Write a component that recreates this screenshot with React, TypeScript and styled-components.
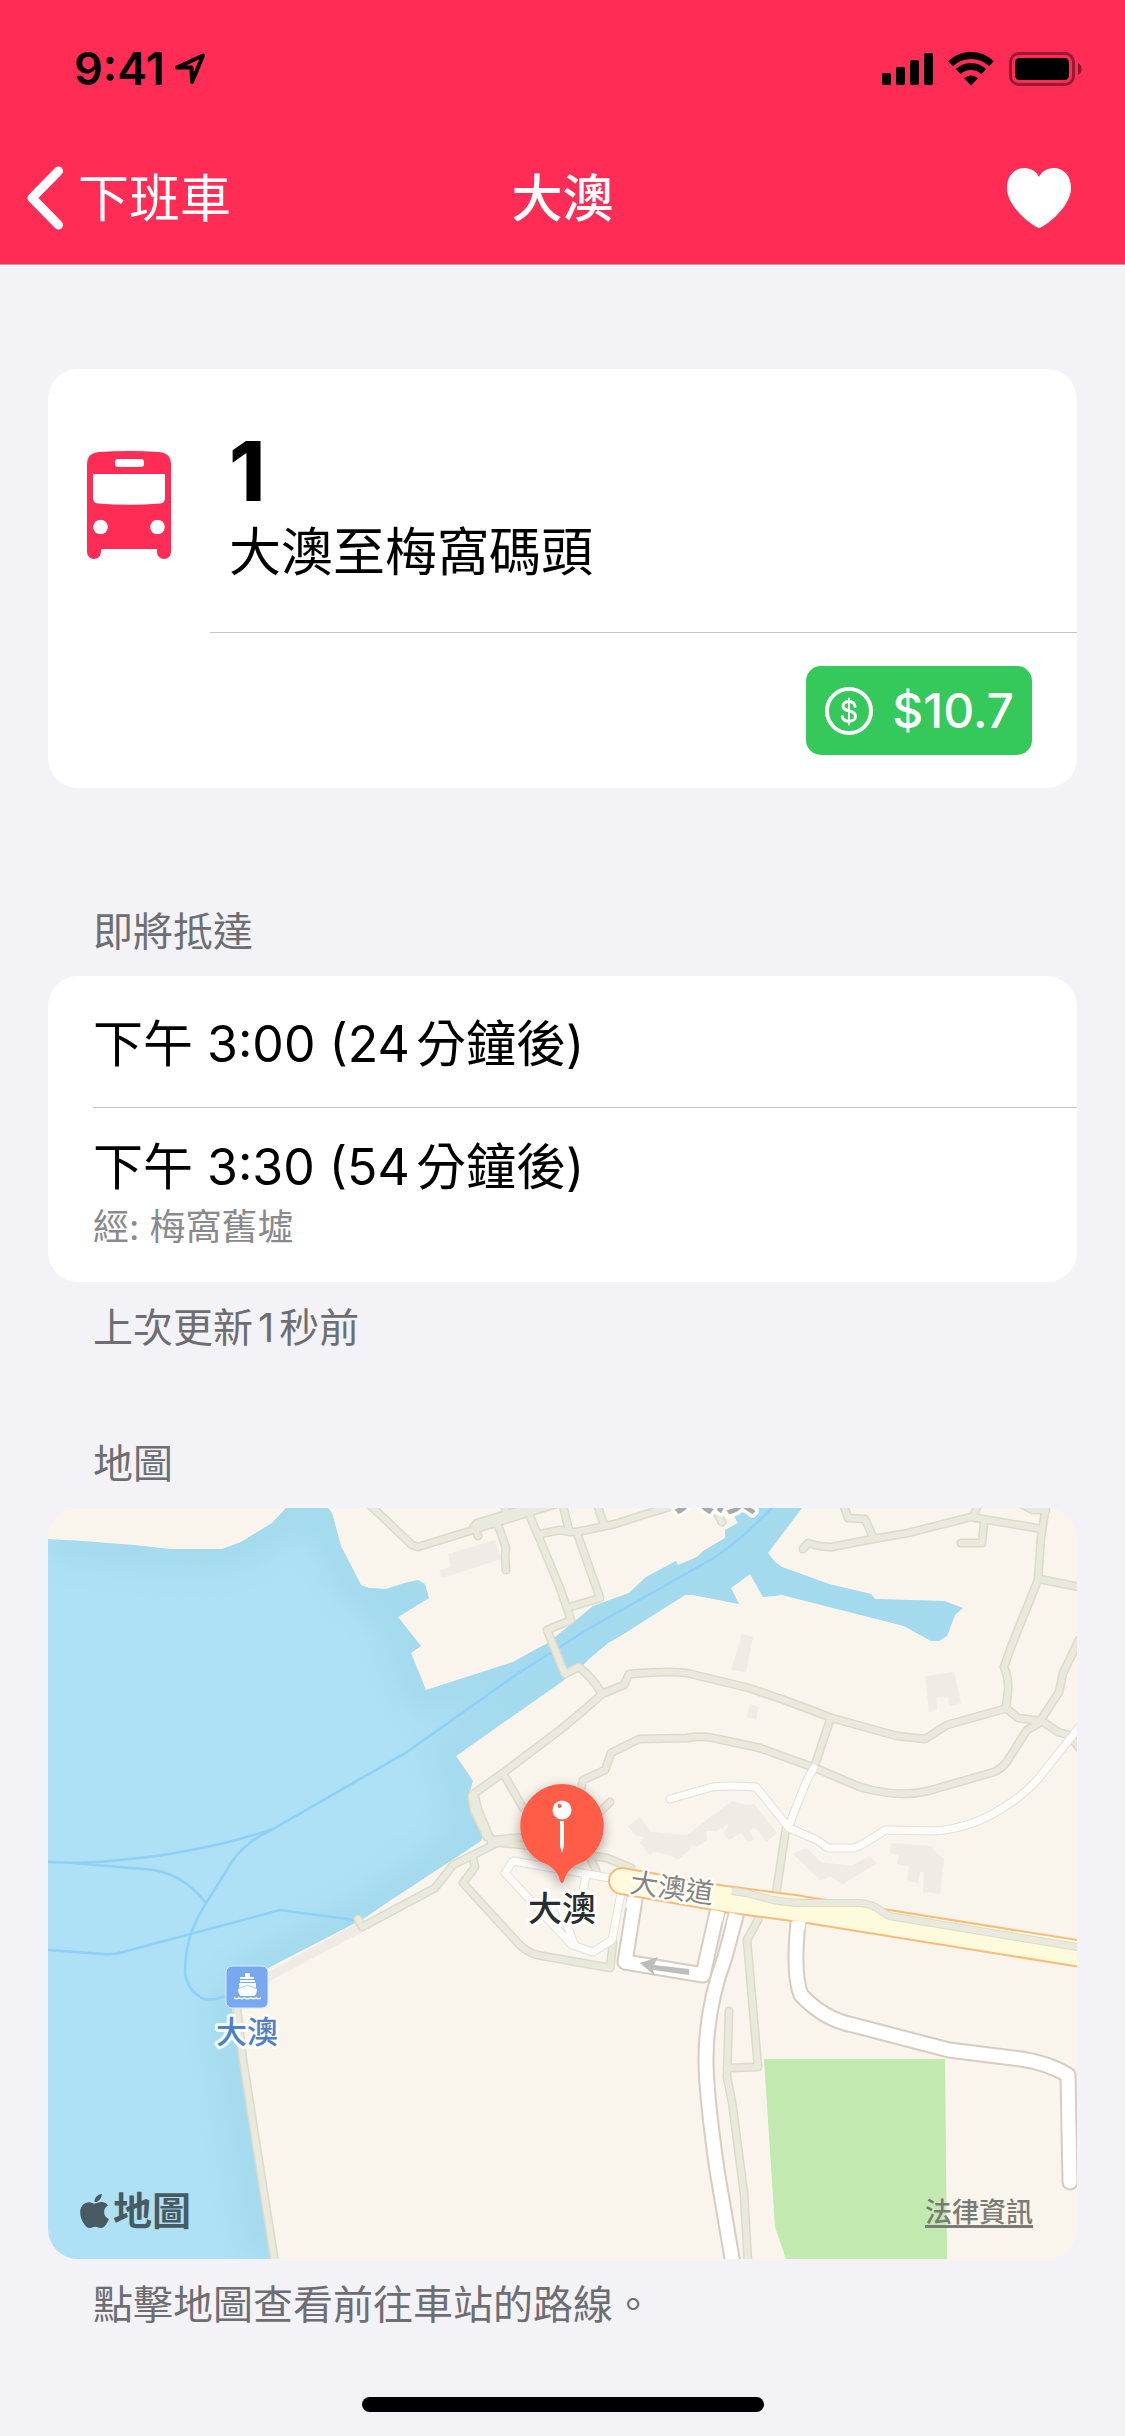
import React from 'react';
import styled, { createGlobalStyle } from 'styled-components';
import { FaApple } from 'react-icons/fa';

const color = {
  brand: '#ff2d55',
  page: '#f2f2f7',
  card: '#ffffff',
  line: '#c6c6c8',
  caption: '#6d6d72',
  secondary: '#8a8a8e',
  fare: '#35c85b',
};

const GlobalStyle = createGlobalStyle`
  * { box-sizing: border-box; }
  body {
    margin: 0;
    background: ${color.page};
    color: #000;
    font-family: Inter, "Noto Sans CJK TC", "Noto Sans CJK HK", sans-serif;
    text-autospace: normal;
  }
  h1, h2, p, ul { margin: 0; padding: 0; font-weight: 400; }
  button { font: inherit; color: inherit; background: none; border: 0; padding: 0; cursor: pointer; }
  svg { display: block; flex: none; }
`;

const Screen = styled.div`
  min-height: 100vh;
  display: flex;
  flex-direction: column;
`;

const Header = styled.header`
  background: ${color.brand};
  border-bottom: 1px solid #b3a3ab;
`;

const StatusBar = styled.div`
  height: 132px;
  padding: 6px 43px 0 74px;
  display: flex;
  align-items: center;
  justify-content: space-between;
`;

const StatusGroup = styled.div<{ $gap: number }>`
  display: flex;
  align-items: center;
  gap: ${({ $gap }) => $gap}px;
`;

const Clock = styled.time`
  font-size: 45px;
  line-height: 54px;
  font-weight: 600;
`;

const NavBar = styled.nav`
  height: 132px;
  padding: 0 27px;
  display: grid;
  grid-template-columns: 1fr auto 1fr;
  align-items: center;
  color: #fff;
  font-size: 51px;
  line-height: 66px;
`;

const BackButton = styled.button`
  justify-self: start;
  display: flex;
  align-items: center;
  gap: 14px;
`;

const BackLabel = styled.span`
  padding-top: 2px;
`;

const Title = styled.h1`
  padding-top: 2px;
  font-size: 51px;
  font-weight: 500;
`;

const FavouriteButton = styled.button`
  justify-self: end;
  padding-right: 27px;
`;

const Content = styled.main`
  padding: 104px 48px 0;
`;

const Card = styled.div`
  background: ${color.card};
  border-radius: 30px;
  overflow: hidden;
`;

const RouteRow = styled.div`
  display: flex;
  align-items: center;
  padding: 55px 39px 46px;
  gap: 58px;
`;

const RouteNumber = styled.p`
  font-size: 82px;
  line-height: 96px;
  font-weight: 800;
`;

const RouteName = styled.p`
  font-size: 52px;
  line-height: 66px;
`;

const FareRow = styled.div`
  margin-left: 162px;
  border-top: 1px solid ${color.line};
  padding: 33px 45px 33px 0;
  display: flex;
  justify-content: flex-end;
`;

const FareBadge = styled.span`
  display: flex;
  align-items: center;
  gap: 18px;
  height: 89px;
  padding: 0 18px;
  border-radius: 15px;
  background: ${color.fare};
  color: #fff;
  font-size: 48px;
  font-weight: 500;
`;

const Section = styled.section<{ $top: number }>`
  padding-top: ${({ $top }) => $top}px;
`;

const SectionTitle = styled.h2`
  padding: 0 45px 17px;
  font-size: 40px;
  line-height: 54px;
  color: ${color.caption};
`;

const SectionNote = styled.p`
  padding: 19px 45px 0;
  font-size: 40px;
  line-height: 54px;
  color: ${color.caption};
`;

const ArrivalList = styled.ul`
  list-style: none;
`;

const Arrival = styled.li`
  margin-left: 45px;
  padding: 35px 45px 30px 0;
  & + & {
    border-top: 1px solid ${color.line};
    padding: 26px 45px 28px 0;
  }
`;

const ArrivalTime = styled.p`
  font-size: 50px;
  line-height: 66px;
`;

const ArrivalVia = styled.p`
  font-size: 36px;
  line-height: 54px;
  color: ${color.secondary};
`;

const MapCard = styled(Card)`
  position: relative;
  height: 751px;
  background: #f9f4ec;
`;

const MapOverlay = styled.div`
  position: absolute;
  left: 32px;
  right: 44px;
  bottom: 21px;
  display: flex;
  align-items: center;
  justify-content: space-between;
`;

const MapBrand = styled.span`
  display: flex;
  align-items: center;
  gap: 4px;
  color: #485b62;
  font-size: 39px;
  line-height: 54px;
  font-weight: 600;
`;

const AppleLogo = styled(FaApple)`
  width: 29px;
  height: 36px;
`;

const LegalLink = styled.a`
  padding-top: 4px;
  color: #7b7b76;
  font-size: 27px;
  line-height: 36px;
  font-weight: 500;
  text-decoration: underline;
  text-decoration-thickness: 3px;
  text-underline-offset: 3px;
`;

const MapLabel = styled.text<{ $size: number; $weight?: number; $halo?: number }>`
  font-size: ${({ $size }) => $size}px;
  font-weight: ${({ $weight }) => $weight ?? 500};
  text-anchor: middle;
  paint-order: stroke;
  stroke: #fff;
  stroke-opacity: 0.9;
  stroke-width: ${({ $halo }) => $halo ?? 7}px;
  stroke-linejoin: round;
`;

const BottomBar = styled.footer`
  margin-top: auto;
  padding-bottom: 24px;
  display: flex;
  justify-content: center;
`;

const HomeIndicator = styled.div`
  width: 402px;
  height: 15px;
  border-radius: 8px;
  background: #000;
`;

const LocationIcon = () => (
  <svg width="30" height="32" viewBox="0 0 30 32" fill="none" stroke="#000" strokeWidth="4" strokeLinejoin="round" aria-hidden="true">
    <path d="M2 14.500 28 2.500 17 29 16.500 14.500Z" />
  </svg>
);

const SignalIcon = () => (
  <svg width="51" height="34" viewBox="0 0 51 34" aria-hidden="true">
    <rect x="0" y="21" width="9" height="12" rx="2" />
    <rect x="14" y="15" width="9" height="18" rx="2" />
    <rect x="28" y="8" width="9" height="25" rx="2" />
    <rect x="42" y="1" width="9" height="32" rx="2" />
  </svg>
);

const WifiIcon = () => (
  <svg width="46" height="34" viewBox="0 0 46 34" fill="none" aria-hidden="true">
    <path d="M2.600 11.700a29.500 29.500 0 0 1 40.800 0" stroke="#000" strokeWidth="7" />
    <path d="M10.200 19.600a18.500 18.500 0 0 1 25.600 0" stroke="#000" strokeWidth="7" />
    <path d="M16.100 26.300a10 10 0 0 1 13.800 0L23 33.500z" fill="#000" />
  </svg>
);

const BatteryIcon = () => (
  <svg width="73" height="34" viewBox="0 0 73 34" aria-hidden="true">
    <rect x="1.500" y="1.500" width="63" height="31" rx="8.500" fill="none" stroke="#000" strokeOpacity="0.4" strokeWidth="3" />
    <rect x="6" y="6" width="54" height="22" rx="4.500" />
    <path d="M69 11c5 2 5 10 0 12z" fillOpacity="0.45" />
  </svg>
);

const ChevronIcon = () => (
  <svg width="37" height="64" viewBox="0 0 37 64" fill="none" stroke="#fff" strokeWidth="9" strokeLinecap="round" strokeLinejoin="round" aria-hidden="true">
    <path d="M31.500 5 5 32l26.500 27" />
  </svg>
);

const HeartIcon = () => (
  <svg width="64" height="60" viewBox="0 0 64 60" fill="#fff" aria-hidden="true">
    <path d="M32 60C28 60 0 40 0 20 0 8 7 0 17.500 0 24 0 29.500 3.500 32 9 34.500 3.500 40 0 46.500 0 57 0 64 8 64 20 64 40 36 60 32 60Z" />
  </svg>
);

const BusIcon = () => (
  <svg width="84" height="108" viewBox="0 0 84 108" aria-hidden="true">
    <path
      fill={color.brand}
      d="M12 1Q42-1 72 1 84 2 84 13V101a7 7 0 0 1-14 0V98H14v3a7 7 0 0 1-14 0V13Q0 2 12 1Z"
    />
    <g fill="#fff">
      <rect x="28" y="8" width="29" height="8" rx="3" />
      <path d="M6 23H78V47Q78 52 73 52.500 42 55 11 52.500 6 52 6 47Z" />
      <circle cx="13.500" cy="76" r="7.300" />
      <circle cx="70.500" cy="76" r="7.300" />
    </g>
  </svg>
);

const CoinIcon = () => (
  <svg width="50" height="50" viewBox="0 0 50 50" fill="none" stroke="#fff" strokeLinecap="round" aria-hidden="true">
    <circle cx="25" cy="25" r="22" strokeWidth="4" />
    <path strokeWidth="3" d="M31 20.500C30.500 17 28.500 15.500 25 15.500 21.500 15.500 19 17.200 19 20 19 23 21.500 23.800 25 24.800 29 25.900 31.500 27 31.500 30.300 31.500 33.300 29 35.300 25 35.300 21.200 35.300 18.700 33.500 18.300 30.500" />
    <path strokeWidth="2" d="M25 12.500v26" />
  </svg>
);

const WATER =
  'M0 31 34 33 85 37 122 41H174L193 34 224 15 238 0H280L284 5 293 38 313 77 321 80 338 81 360 74 370 72 377 76 381 90 350 109 373 138 363 145 378 182 465 154 492 139 500 135 512 125 527 113 545 98 581 85 598 69 628 53 630 57 649 49 655 43 677 30V22L690 15 686 8 694 3 705 7 710 0H754L720 45 727 54 734 59 781 76 823 86 827 91 896 93 915 100 907 107 899 128 891 133H883L856 118 734 87 715 89 702 66 683 80 691 96 645 87H637L574 127 560 135 541 151 534 158 512 175 408 248 425 273 420 289 435 327 433 333 343 392 315 411 220 460 184 500 223 751';

const FERRY_LINES = [
  'M0 354 29 355Q90 352 132 344 180 336 225 321L359 244 469 166 512 139 540 121 664 51Q691 34 724 0',
  'M24 355 95 361Q132 362 158 395',
  'M225 321Q200 332 185 352L160 392Q150 408 145 420 137 440 137 465 140 484 156 491 166 493 178 488',
  'M0 442 55 446Q65 447 75 444L232 402 307 412',
];

const BUILDINGS = [
  '400,46 447,32 453,51 394,70 391,62 403,59',
  '694,126 705,129 698,164 683,162',
  '702,196 711,199 708,212 699,209',
  '877,168 906,164 913,195 901,198 900,188 888,190 889,201 881,204',
  '580,318 592,309 603,324 639,327 684,293 698,297 706,296 729,325 719,334 707,320 701,322 706,331 700,334 693,325 681,332 676,326 681,315 669,323 658,323 659,332 648,339 644,336 641,342 630,352 622,347 605,344 602,348 592,334 596,329 588,328',
  '745,346 758,340 773,354 803,358 821,348 829,355 795,376 782,369 772,372',
  '843,335 884,338 886,343 896,351 892,386 875,384 876,364 872,364 870,375 859,373 861,358 849,356 851,347 842,345',
  '220,464 309,415 314,424 220,474',
];

const FOOTPATHS = [
  'M322-3 364 37 370 39 425 22 479 5 512-5',
  'M430 28 426 18 429 15 459 6 500-6',
  'M459 8 456-4',
  'M450 17 458 40 457 47 458 62',
  'M480 4 490 27 512 80 523 112 499 122 517 166 531 159Q545 170 554 186',
  'M492 26 512 22 522 24H529L567 16 595 7 625-2',
  'M515-2 521 22',
  'M550-1 556 17',
  'M529 25 552 90 522 99',
  'M669 5 674 14',
  'M796-2 800 10 817 11 825 29',
  'M755 41 760 35Q772 39 784 39L825 31 860 25 923 9 994 21',
  'M929-2 926 8',
  'M936 15 934 35 913 35',
  'M973-4 985 2 998 2',
  'M998-2 993 29 990 72 963 139 956 159Q961 172 960 182L958 200 970 210 994 213 1010 224 1021 227 1032 241',
  'M991 71 1031 79',
  'M1031 132 1015 165 1011 184 998 204 993 212',
  'M424 287 455 265 512 222 536 202 554 186 576 177 581 166Q630 162 643 166L701 180 739 193 784 210 849 228 877 231 899 217 956 201',
  'M782 212 767 257',
  'M533 282 535 272 557 262 563 245 591 231 639 230Q655 227 670 231L712 240 767 260 812 279Q850 290 880 283L946 264Q955 260 960 252L979 222 993 214',
  'M562 294 550 306',
  'M455 265 475 300',
  'M427 289 430 302 443 332',
  'M424 289 426 302 439 329',
  'M443 332 480 329',
  'M443 334 475 337 559 350 583 360',
  'M540 345 548 362',
  'M310 411 314 419 387 380 405 357 449 335',
  'M425 350 427 359 415 375 469 434Q478 444 489 447L512 451 562 460 565 435',
  'M189 501 195 552 227 755',
  'M710 412 699 432 710 559 679 560',
  'M681 503 679 569 684 594 696 685 700 755',
  'M738 320 728 386',
];

const LANES = [
  'M622 291 664 279Q680 277 708 279L741 320 769 332 780 340H806Q815 337 837 322L887 323Q925 320 956 299 975 288 990 271L1032 218',
  'M766 260 759 272 741 317',
  'M568 371 465 353 457 365 524 437 545 444 564 432 573 385',
  'M538 367 533 395',
  'M513 400 526 436',
];

const STREETS = [
  'M690 400 677 449Q658 500 658 552 658 585 669 662L685 756',
  'M588 385 577 454 655 467 671 395',
  'M751 405Q744 465 753 487 777 512 805 517L901 542 973 551Q1000 555 1020 567L1022 674',
];

const MAIN_ROAD = 'M574 373 677 391 753 401 1040 447';
const ROADSIDE_PATH = 'M684 383 698 385 725 392Q740 395 760 395H812Q822 396 829 400L841 408 1035 440';

type RoadsProps = { paths: string[]; edge: string; fill: string; width: number; border: number; cap?: 'round' | 'butt' };

const Roads = ({ paths, edge, fill, width, border, cap = 'round' }: RoadsProps) => (
  <g fill="none" strokeLinejoin="round" strokeLinecap={cap}>
    <g stroke={edge} strokeWidth={width}>
      {paths.map((d) => <path key={d} d={d} />)}
    </g>
    <g stroke={fill} strokeWidth={width - border * 2}>
      {paths.map((d) => <path key={d} d={d} />)}
    </g>
  </g>
);

const StopMap = () => (
  <svg width="100%" height="100%" viewBox="0 0 1029 751" preserveAspectRatio="xMidYMid slice" role="img" aria-label="大澳">
    <defs>
      <clipPath id="water"><path d={`${WATER}H0Z`} /></clipPath>
      <filter id="soft" x="-10%" y="-10%" width="120%" height="120%"><feGaussianBlur stdDeviation="16" /></filter>
      <filter id="drop" x="-40%" y="-40%" width="180%" height="180%">
        <feDropShadow dx="0" dy="4" stdDeviation="6" floodColor="#000" floodOpacity="0.35" />
      </filter>
    </defs>
    <rect width="1029" height="751" fill="#f9f4ec" />
    <path d="M716 551H897L899 751H738L727 719Z" fill="#c2e9b0" />
    <g clipPath="url(#water)">
      <path d={`${WATER}H0Z`} fill="#aee1f6" />
      <path d={WATER} fill="none" stroke="#a4daed" strokeWidth="52" filter="url(#soft)" />
      <g fill="none" stroke="#8ed0f7" strokeWidth="2.500">
        {FERRY_LINES.map((d) => <path key={d} d={d} />)}
      </g>
    </g>
    <g fill="#f0ebe5">
      {BUILDINGS.map((points) => <polygon key={points} points={points} />)}
    </g>
    <Roads paths={FOOTPATHS} edge="#dddac9" fill="#e9e9dd" width={9} border={1.5} />
    <Roads paths={LANES} edge="#e3e0da" fill="#fefcf9" width={9} border={1} />
    <Roads paths={STREETS} edge="#d6ccc2" fill="#fff" width={17} border={2} />
    <Roads paths={[MAIN_ROAD]} edge="#f9bb7c" fill="#fdfbdc" width={28} border={2} />
    <g fill="none" stroke="#fff" strokeWidth="13">
      <path d="M586 390 584 401" />
      <path d="M688 406 685 417" />
      <path d="M670 403 668 412" />
      <path d="M751 413 750 421" />
    </g>
    <Roads paths={[ROADSIDE_PATH]} edge="#dddac9" fill="#e9e9dd" width={8} border={1} cap="butt" />
    <path d="M592 455 610 449 606 457 641 461V467L605 462 607 468Z" fill="#bdbdbd" />

    <MapLabel x="667" y="2" $size={42} $weight={600} fill="#a9a9a7">大澳</MapLabel>
    <MapLabel x="624" y="390" $size={28} $weight={400} $halo={5} fill="#858582" transform="rotate(8 624 380)">大澳道</MapLabel>

    <g>
      <rect x="178" y="458" width="42" height="42" rx="6" fill="#78a9f0" stroke="#d8ecfb" />
      <g fill="#fff">
        <path d="M197 465h5v4h4v2h-14v-2h5zM192 472h15v2h-15zM191 475h17v5l-8.500-3-8.500 3z" />
        <path d="M190 481l9.500-3.500 9.500 3.500c0 3-1 5-2.500 7h-14c-1.500-2-2.500-4-2.500-7z" />
        <path d="M186 489q2.500 2 5 0 2.500 2 5 0 3.500 2 7 0 2.500 2 5 0 2.500 2 5 0v1.500q-2.500 2-5 0-2.500 2-5 0-3.500 2-7 0-2.500 2-5 0-2.500 2-5 0z" />
      </g>
      <MapLabel x="199" y="535" $size={31} $halo={6} fill="#4f80c2">大澳</MapLabel>
    </g>

    <g>
      <path
        d="M514 276a42 42 0 0 1 23 77q-4 2-9 4-10 6-12 16-2 4-4 0-2-10-12-16-5-2-9-4a42 42 0 0 1 23-77z"
        fill="#ff5d47"
        filter="url(#drop)"
      />
      <circle cx="514" cy="302" r="9.500" fill="#fff" />
      <circle cx="511.500" cy="298" r="2" fill="#ff5d47" />
      <path d="M512 313h4v25l-2 7-2-7z" fill="#fff" />
      <MapLabel x="514" y="413" $size={34} fill="#2c2c2e">大澳</MapLabel>
    </g>
  </svg>
);

const arrivals = [
  { time: '下午 3:00 (24分鐘後)' },
  { time: '下午 3:30 (54分鐘後)', via: '經: 梅窩舊墟' },
];

export default function App() {
  return (
    <Screen>
      <GlobalStyle />
      <Header>
        <StatusBar>
          <StatusGroup $gap={10}>
            <Clock>9:41</Clock>
            <LocationIcon />
          </StatusGroup>
          <StatusGroup $gap={15}>
            <SignalIcon />
            <WifiIcon />
            <BatteryIcon />
          </StatusGroup>
        </StatusBar>
        <NavBar>
          <BackButton type="button">
            <ChevronIcon />
            <BackLabel>下班車</BackLabel>
          </BackButton>
          <Title>大澳</Title>
          <FavouriteButton type="button" aria-label="收藏">
            <HeartIcon />
          </FavouriteButton>
        </NavBar>
      </Header>

      <Content>
        <Card>
          <RouteRow>
            <BusIcon />
            <div>
              <RouteNumber>1</RouteNumber>
              <RouteName>大澳至梅窩碼頭</RouteName>
            </div>
          </RouteRow>
          <FareRow>
            <FareBadge>
              <CoinIcon />
              $10.7
            </FareBadge>
          </FareRow>
        </Card>

        <Section $top={117}>
          <SectionTitle>即將抵達</SectionTitle>
          <Card>
            <ArrivalList>
              {arrivals.map(({ time, via }) => (
                <Arrival key={time}>
                  <ArrivalTime>{time}</ArrivalTime>
                  {via && <ArrivalVia>{via}</ArrivalVia>}
                </Arrival>
              ))}
            </ArrivalList>
          </Card>
          <SectionNote>上次更新1秒前</SectionNote>
        </Section>

        <Section $top={82}>
          <SectionTitle>地圖</SectionTitle>
          <MapCard>
            <StopMap />
            <MapOverlay>
              <MapBrand>
                <AppleLogo viewBox="10 20 364 472" aria-hidden="true" />
                地圖
              </MapBrand>
              <LegalLink href="#legal">法律資訊</LegalLink>
            </MapOverlay>
          </MapCard>
          <SectionNote>點擊地圖查看前往車站的路線。</SectionNote>
        </Section>
      </Content>

      <BottomBar>
        <HomeIndicator />
      </BottomBar>
    </Screen>
  );
}
